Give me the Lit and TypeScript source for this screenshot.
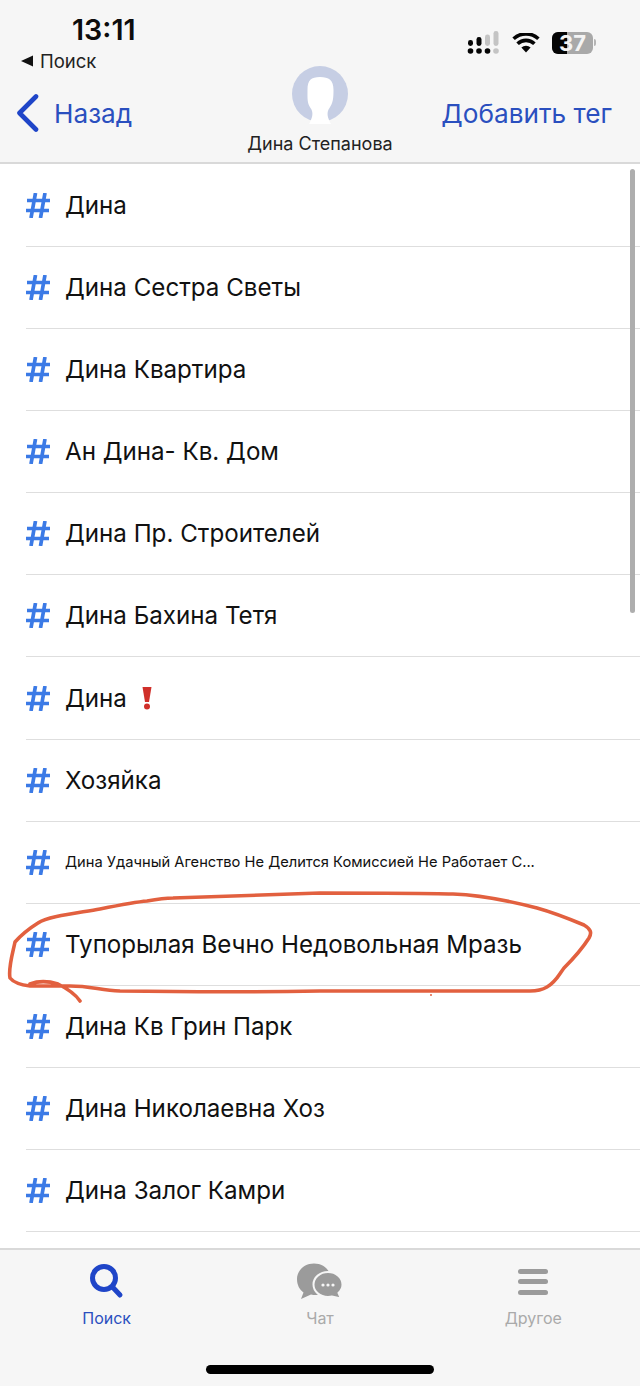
import { LitElement, html, css, svg } from 'lit';
import { customElement } from 'lit/decorators.js';

const TAGS = [
  'Дина',
  'Дина Сестра Светы',
  'Дина Квартира',
  'Ан Дина- Кв. Дом',
  'Дина Пр. Строителей',
  'Дина Бахина Тетя',
  'Дина',
  'Хозяйка',
  'Дина Удачный Агенство Не Делится Комиссией Не Работает С...',
  'Тупорылая Вечно Недовольная Мразь',
  'Дина Кв Грин Парк',
  'Дина Николаевна Хоз',
  'Дина Залог Камри',
];

const hashIcon = svg`<svg class="hash" viewBox="0 0 24 25" width="24" height="25">
  <path d="M9.5 0 L5 25 M19 0 L14.5 25 M1 7.5 H24 M0 17.5 H23" fill="none" stroke="#3b7ae6" stroke-width="3.7"/>
</svg>`;

@customElement('app-root')
export class AppRoot extends LitElement {
  static styles = css`
    :host {
      display: block;
      position: relative;
      width: 640px;
      height: 1386px;
      overflow: hidden;
      background: #fff;
      font-family: Inter, "Liberation Sans", sans-serif;
      color: #111;
    }
    .page {
      display: flex;
      flex-direction: column;
      height: 100%;
    }
    .header {
      background: #f6f6f6;
      border-bottom: 2px solid #d9d9d9;
      height: 162px;
      flex: none;
    }
    .status {
      display: flex;
      justify-content: space-between;
      height: 66px;
    }
    .status-left {
      padding: 14px 0 0 21px;
    }
    .time {
      font-size: 28.6px;
      font-weight: 600;
      line-height: 32px;
      padding-left: 51px;
      color: #0c0c0c;
    }
    .return {
      display: flex;
      align-items: center;
      gap: 7px;
      font-size: 18.5px;
      line-height: 22px;
      margin-top: 4px;
      color: #222;
    }
    .status-right {
      display: flex;
      align-items: center;
      gap: 12px;
      padding: 0 44px 0 0;
      height: 85px;
    }
    .battery {
      display: flex;
      align-items: center;
      gap: 1px;
    }
    .cell {
      position: relative;
      width: 41px;
      height: 22px;
      border-radius: 6px;
      background: #a9a9a9;
      color: #f4f4f4;
      font-size: 22px;
      font-weight: 700;
      line-height: 22px;
      text-align: center;
    }
    .cell-fill {
      position: absolute;
      left: 0;
      top: 0;
      bottom: 0;
      width: 37%;
      border-radius: 6px 0 0 6px;
      background: #050505;
    }
    .cell span {
      position: relative;
    }
    .nub {
      width: 2px;
      height: 7px;
      border-radius: 0 2px 2px 0;
      background: #b5b5b5;
    }
    .nav {
      display: grid;
      grid-template-columns: 1fr auto 1fr;
      height: 96px;
    }
    .back {
      display: flex;
      align-items: center;
      gap: 15px;
      height: 95px;
      padding-left: 16px;
      color: #2a4fbf;
      font-size: 26.2px;
    }
    .back svg {
      margin-top: -2px;
    }
    .add {
      justify-self: end;
      display: flex;
      align-items: center;
      height: 95px;
      padding-right: 28px;
      color: #2a4fbf;
      font-size: 26.2px;
    }
    .person {
      display: flex;
      flex-direction: column;
      align-items: center;
      font-size: 18px;
      color: #222;
    }
    .avatar {
      display: block;
      width: 58px;
      height: 58px;
      margin-bottom: 9px;
    }
    .list {
      flex: 1;
      min-height: 0;
      overflow: hidden;
      position: relative;
      padding-top: 1px;
    }
    .row {
      display: flex;
      align-items: center;
      gap: 15px;
      height: 82.08px;
      margin-left: 26px;
      box-sizing: border-box;
      border-bottom: 1px solid #dedede;
      font-size: 24.15px;
      white-space: nowrap;
    }
    .row.small {
      font-size: 14.7px;
    }
    .hash {
      flex: none;
    }
    .bang {
      margin-left: 14px;
    }
    .scrollbar {
      position: absolute;
      right: 5px;
      top: 5px;
      width: 5px;
      height: 444px;
      border-radius: 3px;
      background: #aeaeae;
    }
    .tabs {
      flex: none;
      height: 138px;
      box-sizing: border-box;
      border-top: 2px solid #d9d9d9;
      background: #f6f6f6;
      position: relative;
      display: grid;
      grid-template-columns: repeat(3, 1fr);
    }
    .tab {
      display: flex;
      flex-direction: column;
      align-items: center;
      padding-top: 12px;
      font-size: 16px;
      color: #aaa;
    }
    .tab.active {
      color: #2a4fbf;
    }
    .tab svg {
      display: block;
      height: 38px;
      margin-bottom: 8px;
    }
    .home {
      position: absolute;
      left: 206px;
      bottom: 12px;
      width: 228px;
      height: 9px;
      border-radius: 5px;
      background: #000;
    }
    .scribble {
      position: absolute;
      left: 0;
      top: 0;
      pointer-events: none;
    }
  `;

  private statusIcons() {
    return html`
      <svg width="33" height="24" viewBox="0 0 33 24">
        <g fill="#050505">
          <circle cx="3.5" cy="20" r="2.8" /><circle cx="12" cy="20" r="2.8" /><circle cx="20.5" cy="20" r="2.8" />
          <rect x="1" y="9" width="5" height="6" rx="2.4" /><rect x="9.5" y="6" width="5" height="9" rx="2.4" />
        </g>
        <g fill="#c4c4c4">
          <rect x="18" y="3.5" width="5" height="11.5" rx="2.4" /><rect x="26.5" y="0" width="5" height="15" rx="2.4" />
          <circle cx="29" cy="20" r="2.8" />
        </g>
      </svg>
      <svg width="28" height="20" viewBox="0 0 28 20">
        <path d="M14 19.5 L9.4 14.6 A6.6 6.6 0 0 1 18.6 14.6 Z" fill="#050505" />
        <path d="M5.6 10.8 A12 12 0 0 1 22.4 10.8 M1.6 5.8 A18 18 0 0 1 26.4 5.8" fill="none" stroke="#050505" stroke-width="3.6" />
      </svg>
      <div class="battery">
        <div class="cell"><div class="cell-fill"></div><span>37</span></div>
        <div class="nub"></div>
      </div>
    `;
  }

  private renderRow(tag: string, i: number) {
    return html`
      <div class="row ${tag.length > 40 ? 'small' : ''}">
        ${hashIcon}
        <span>${tag}${i === 6 ? html`<svg class="bang" width="12" height="24" viewBox="0 0 12 24" style="vertical-align:-3px">
          <path d="M1.5 1 H10.5 L8 16 H4 Z" fill="#d0302a" /><circle cx="6" cy="20.5" r="3" fill="#d0302a" />
        </svg>` : ''}</span>
      </div>
    `;
  }

  render() {
    return html`
      <div class="page">
        <div class="header">
          <div class="status">
            <div class="status-left">
              <div class="time">13:11</div>
              <div class="return">
                <svg width="12" height="12" viewBox="0 0 12 12"><path d="M12 0.5 V11.5 L0 6 Z" fill="#111" /></svg>
                Поиск
              </div>
            </div>
            <div class="status-right">${this.statusIcons()}</div>
          </div>
          <div class="nav">
            <div class="back">
              <svg width="23" height="38" viewBox="0 0 23 38">
                <path d="M20 2.5 L3.5 19 L20 35.5" fill="none" stroke="#1f45c8" stroke-width="4.6" stroke-linecap="round" stroke-linejoin="round" />
              </svg>
              Назад
            </div>
            <div class="person">
              <svg class="avatar" viewBox="0 0 58 58">
                <circle cx="29" cy="28" r="28" fill="#c6cee4" />
                <path d="M29 11 C38 11 42.5 14 42.5 24 C42.5 32 42 37 38.5 42 C35.5 46 36 51 40 58 L18 58 C22 51 22.5 46 19.5 42 C16 37 16.5 32 16.5 24 C16.5 14 20 11 29 11 Z" fill="#fff" />
              </svg>
              Дина Степанова
            </div>
            <div class="add">Добавить тег</div>
          </div>
        </div>
        <div class="list">
          ${TAGS.map((t, i) => this.renderRow(t, i))}
          <div class="scrollbar"></div>
        </div>
        <div class="tabs">
          <div class="tab active">
            <svg width="34" height="38" viewBox="0 0 34 38">
              <circle cx="14" cy="16" r="11.5" fill="none" stroke="#1f45c8" stroke-width="5" />
              <path d="M22.5 25 L30 33" stroke="#1f45c8" stroke-width="5" stroke-linecap="round" />
            </svg>
            Поиск
          </div>
          <div class="tab">
            <svg width="48" height="38" viewBox="0 0 48 38">
              <path d="M18 1.5 C8.5 1.5 1 8.5 1 17 C1 23 3.5 27.5 7.5 30.5 L5 37 L15 32.5 C16.5 33 18 33 20 33 C29 33 35 26 35 17 C35 8.5 27.5 1.5 18 1.5 Z" fill="#9b9b9b" />
              <path d="M32 10 C24 10 17.5 15.5 17.5 22.5 C17.5 29.5 24 35 32 35 C34 35 35 34.8 36 34.5 L45 36.5 L42.5 31 C45 28.5 46.5 26 46.5 22.5 C46.5 15.5 40 10 32 10 Z" fill="#9b9b9b" stroke="#f6f6f6" stroke-width="2" />
              <g fill="#f6f6f6"><circle cx="27" cy="23" r="1.6" /><circle cx="32" cy="23" r="1.6" /><circle cx="37" cy="23" r="1.6" /></g>
            </svg>
            Чат
          </div>
          <div class="tab">
            <svg width="30" height="38" viewBox="0 0 30 38">
              <g fill="#9b9b9b">
                <rect y="7" width="30" height="5" rx="2.5" /><rect y="17" width="30" height="5" rx="2.5" /><rect y="28" width="30" height="5" rx="2.5" />
              </g>
            </svg>
            Другое
          </div>
          <div class="home"></div>
        </div>
      </div>
      <svg class="scribble" width="640" height="1386" viewBox="0 0 640 1386">
        <path d="M80 1001 C76 995 70 990 58 984 C48 981 38 981 30 984 M30 986 C22 985 14 983 10 978 C8 968 13 952 15 942 C22 934 30 928 38 923 C48 916 78 913 100 909 C120 905 135 902 147 901 C158 899 166 898 173 898 C220 896 270 895 320 893 C360 893 420 893 453 894 C480 895 510 901 537 908 C555 913 572 920 584 925 C591 929 592 933 589 938 C582 949 572 960 564 968 C558 976 556 982 547 987 C542 990 538 991 530 991 L430 991 L320 991 C260 992 190 992 120 991 C100 990 90 986 70 986 C55 986 40 986 30 986" fill="none" stroke="#e2603f" stroke-width="3.6" stroke-linecap="round" stroke-linejoin="round" />
        <circle cx="431" cy="995" r="1" fill="#e2603f" />
      </svg>
    `;
  }
}

declare global {
  interface HTMLElementTagNameMap {
    'app-root': AppRoot;
  }
}
